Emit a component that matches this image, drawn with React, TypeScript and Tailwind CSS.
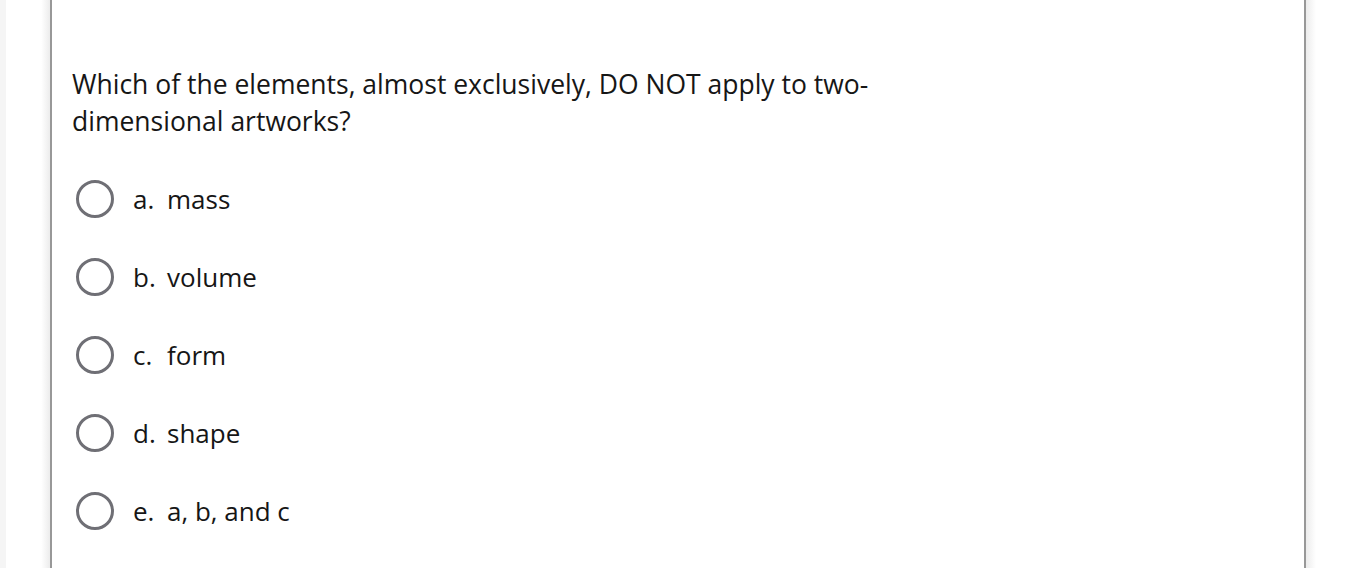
import React from "react";

const options = [
  { l: "a.", t: "mass" },
  { l: "b.", t: "volume" },
  { l: "c.", t: "form" },
  { l: "d.", t: "shape" },
  { l: "e.", t: "a, b, and c" },
];

export default function App() {
  return (
    <div
      className="w-[1348px] h-[568px] overflow-hidden bg-white flex"
      style={{ fontFamily: '"Open Sans", "Noto Sans", sans-serif' }}
    >
      <div className="w-[6px] bg-[#f5f5f5]" />
      <div className="w-[44px] bg-gradient-to-r from-white from-80% to-[#ececec]" />
      <div className="w-[1256px] border-x-2 border-[#989898] pl-[20px] pt-[66px] text-[#161616]">
        <div className="text-[26.5px] leading-[37px] w-[840px]">
          Which of the elements, almost exclusively, DO NOT apply to two-dimensional artworks?
        </div>
        <div className="mt-[40px] flex flex-col gap-[40px]">
          {options.map((o) => (
            <div key={o.l} className="flex items-center h-[38px]">
              <div className="ml-[4px] w-[38px] h-[38px] rounded-full border-[3px] border-[#6f6f75]" />
              <span className="ml-[19px] text-[26px] w-[34px]">{o.l}</span>
              <span className="text-[26px]">{o.t}</span>
            </div>
          ))}
        </div>
      </div>
      <div className="w-[10px] bg-gradient-to-r from-[#ececec] to-white" />
    </div>
  );
}
